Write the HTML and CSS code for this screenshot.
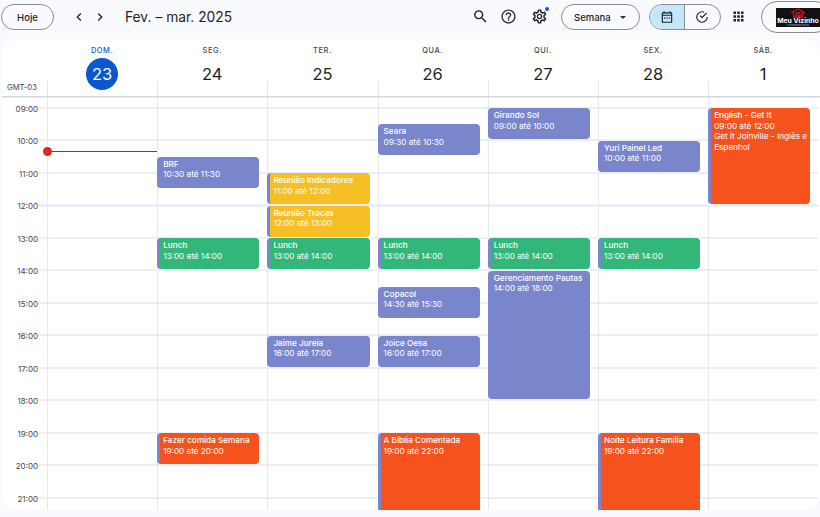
FILE: index.html
```html
<!DOCTYPE html>
<html lang="pt-BR">
<head>
    <meta charset="UTF-8">
    <meta name="viewport" content="width=device-width, initial-scale=1.0">
    <title>Agenda - Fev. – mar. 2025</title>
    <link rel="stylesheet" href="styles.css">
</head>
<body>
    <!-- barra de cima -->
    <header class="toolbar">
        <button class="pill today">Hoje</button>
        <div class="nav-arrows">
            <svg viewBox="0 0 24 24"><path d="M15.4 7.4 14 6l-6 6 6 6 1.4-1.4-4.6-4.6z"/></svg>
            <svg viewBox="0 0 24 24"><path d="M8.6 7.4 10 6l6 6-6 6-1.4-1.4 4.6-4.6z"/></svg>
        </div>
        <h1 class="range">Fev. – mar. 2025</h1>
        <div class="tools">
            <svg class="icon-search" viewBox="0 0 24 24"><path d="M15.5 14h-.79l-.28-.27A6.471 6.471 0 0 0 16 9.5 6.5 6.5 0 1 0 9.5 16c1.61 0 3.09-.59 4.23-1.57l.27.28v.79l5 4.99L20.49 19l-4.99-5zm-6 0C7.01 14 5 11.99 5 9.5S7.01 5 9.5 5 14 7.01 14 9.5 11.99 14 9.5 14z"/></svg>
            <svg class="icon-help" viewBox="0 0 24 24"><path d="M11 18h2v-2h-2v2zm1-16C6.48 2 2 6.48 2 12s4.48 10 10 10 10-4.48 10-10S17.52 2 12 2zm0 18c-4.41 0-8-3.59-8-8s3.59-8 8-8 8 3.59 8 8-3.59 8-8 8zm0-14c-2.21 0-4 1.79-4 4h2c0-1.1.9-2 2-2s2 .9 2 2c0 2-3 1.75-3 5h2c0-2.25 3-2.5 3-5 0-2.21-1.79-4-4-4z"/></svg>
            <span class="settings">
                <svg viewBox="0 0 24 24"><path d="M19.43 12.98c.04-.32.07-.64.07-.98 0-.34-.03-.66-.07-.98l2.11-1.65c.19-.15.24-.42.12-.64l-2-3.46c-.09-.16-.26-.25-.44-.25-.06 0-.12.01-.17.03l-2.49 1c-.52-.4-1.08-.73-1.69-.98l-.38-2.65C14.46 2.18 14.25 2 14 2h-4c-.25 0-.46.18-.49.42l-.38 2.65c-.61.25-1.17.59-1.69.98l-2.49-1c-.06-.02-.12-.03-.18-.03-.17 0-.34.09-.43.25l-2 3.46c-.13.22-.07.49.12.64l2.11 1.65c-.04.32-.07.65-.07.98 0 .33.03.66.07.98l-2.11 1.65c-.19.15-.24.42-.12.64l2 3.46c.09.16.26.25.44.25.06 0 .12-.01.17-.03l2.49-1c.52.4 1.08.73 1.69.98l.38 2.65c.03.24.24.42.49.42h4c.25 0 .46-.18.49-.42l.38-2.65c.61-.25 1.17-.59 1.69-.98l2.49 1c.06.02.12.03.18.03.17 0 .34-.09.43-.25l2-3.46c.12-.22.07-.49-.12-.64l-2.11-1.65zm-1.98-1.71c.04.31.05.52.05.73 0 .21-.02.43-.05.73l-.14 1.13.89.7 1.08.84-.7 1.21-1.27-.51-1.04-.42-.9.68c-.43.32-.84.56-1.25.73l-1.06.43-.16 1.13-.2 1.35h-1.4l-.19-1.35-.16-1.13-1.06-.43c-.43-.18-.83-.41-1.23-.71l-.91-.7-1.06.43-1.27.51-.7-1.21 1.08-.84.89-.7-.14-1.13c-.03-.31-.05-.54-.05-.74s.02-.43.05-.73l.14-1.13-.89-.7-1.08-.84.7-1.21 1.27.51 1.04.42.9-.68c.43-.32.84-.56 1.25-.73l1.06-.43.16-1.13.2-1.35h1.39l.19 1.35.16 1.13 1.06.43c.43.18.83.41 1.23.71l.91.7 1.06-.43 1.27-.51.7 1.21-1.07.85-.89.7.14 1.13zM12 8c-2.21 0-4 1.79-4 4s1.79 4 4 4 4-1.79 4-4-1.79-4-4-4zm0 6c-1.1 0-2-.9-2-2s.9-2 2-2 2 .9 2 2-.9 2-2 2z"/></svg>
                <i class="dot"></i>
            </span>
            <button class="pill view-select">Semana <i class="caret"></i></button>
            <div class="switch">
                <span class="switch-part active">
                    <svg viewBox="0 0 24 24"><path d="M19 4h-1V2h-2v2H8V2H6v2H5a2 2 0 0 0-2 2v14a2 2 0 0 0 2 2h14a2 2 0 0 0 2-2V6a2 2 0 0 0-2-2zm0 16H5V10h14v10zM5 8V6h14v2H5zm2 5h2v2H7v-2zm4 0h2v2h-2v-2zm4 0h2v2h-2v-2z"/></svg>
                </span>
                <span class="switch-part">
                    <svg viewBox="0 0 24 24"><path d="M12 2a10 10 0 1 0 10 10h-2a8 8 0 1 1-8-8c1 0 2 .2 3 .6l1.5-1.5A10 10 0 0 0 12 2zm7.3 2.3L12 11.6 9.4 9 8 10.4l4 4 8.7-8.7-1.4-1.4z"/></svg>
                </span>
            </div>
            <svg class="icon-apps" viewBox="0 0 24 24"><path d="M4 4h4v4H4zm6 0h4v4h-4zm6 0h4v4h-4zM4 10h4v4H4zm6 0h4v4h-4zm6 0h4v4h-4zM4 16h4v4H4zm6 0h4v4h-4zm6 0h4v4h-4z"/></svg>
            <div class="profile">
                <div class="logo">
                    <svg viewBox="0 0 16 10"><path d="M1 5 8 1l7 4M3.500 4v5h9V4M6 5h4v2.500H6z" fill="none" stroke="#c8141c" stroke-width="1.300"/></svg>
                    <b>Meu Vizinho</b>
                    <small>SUPERMERCADOS</small>
                </div>
            </div>
        </div>
    </header>

    <main class="card">
        <!-- dias da semana -->
        <div class="week-head">
            <div class="gmt">GMT-03</div>
            <div class="day-head today-head"><span>DOM.</span><strong>23</strong></div>
            <div class="day-head"><span>SEG.</span><strong>24</strong></div>
            <div class="day-head"><span>TER.</span><strong>25</strong></div>
            <div class="day-head"><span>QUA.</span><strong>26</strong></div>
            <div class="day-head"><span>QUI.</span><strong>27</strong></div>
            <div class="day-head"><span>SEX.</span><strong>28</strong></div>
            <div class="day-head"><span>SÁB.</span><strong>1</strong></div>
        </div>

        <div class="week-body">
            <div class="hours">
                <span>09:00</span><span>10:00</span><span>11:00</span><span>12:00</span>
                <span>13:00</span><span>14:00</span><span>15:00</span><span>16:00</span>
                <span>17:00</span><span>18:00</span><span>19:00</span><span>20:00</span>
                <span>21:00</span>
            </div>

            <!-- cada linha do grid = meia hora, a partir das 09:00 -->
            <div class="day">
                <div class="now-line"></div>
            </div>

            <div class="day">
                <div class="event blue" style="grid-row: 4 / span 2"><b>BRF</b>10:30 até 11:30</div>
                <div class="event green stripe" style="grid-row: 9 / span 2"><b>Lunch</b>13:00 até 14:00</div>
                <div class="event orange stripe" style="grid-row: 21 / span 2"><b>Fazer comida Semana</b>19:00 até 20:00</div>
            </div>

            <div class="day">
                <div class="event yellow stripe" style="grid-row: 5 / span 2"><b>Reunião Indicadores</b>11:00 até 12:00</div>
                <div class="event yellow stripe" style="grid-row: 7 / span 2"><b>Reunião Trocas</b>12:00 até 13:00</div>
                <div class="event green stripe" style="grid-row: 9 / span 2"><b>Lunch</b>13:00 até 14:00</div>
                <div class="event blue" style="grid-row: 15 / span 2"><b>Jaime Jureia</b>16:00 até 17:00</div>
            </div>

            <div class="day">
                <div class="event blue" style="grid-row: 2 / span 2"><b>Seara</b>09:30 até 10:30</div>
                <div class="event green stripe" style="grid-row: 9 / span 2"><b>Lunch</b>13:00 até 14:00</div>
                <div class="event blue" style="grid-row: 12 / span 2"><b>Copacol</b>14:30 até 15:30</div>
                <div class="event blue" style="grid-row: 15 / span 2"><b>Joice Oesa</b>16:00 até 17:00</div>
                <div class="event orange stripe" style="grid-row: 21 / span 6"><b>A Bíblia Comentada</b>19:00 até 22:00</div>
            </div>

            <div class="day">
                <div class="event blue" style="grid-row: 1 / span 2"><b>Girando Sol</b>09:00 até 10:00</div>
                <div class="event green stripe" style="grid-row: 9 / span 2"><b>Lunch</b>13:00 até 14:00</div>
                <div class="event blue" style="grid-row: 11 / span 8"><b>Gerenciamento Pautas</b>14:00 até 18:00</div>
            </div>

            <div class="day">
                <div class="event blue" style="grid-row: 3 / span 2"><b>Yuri Painel Led</b>10:00 até 11:00</div>
                <div class="event green stripe" style="grid-row: 9 / span 2"><b>Lunch</b>13:00 até 14:00</div>
                <div class="event orange stripe" style="grid-row: 21 / span 6"><b>Noite Leitura Família</b>19:00 até 22:00</div>
            </div>

            <div class="day">
                <div class="event orange stripe" style="grid-row: 1 / span 6"><b>English - Get It</b>09:00 até 12:00<br>Get it Joinville - Inglês e Espanhol</div>
            </div>
        </div>
    </main>
</body>
</html>
```

FILE: styles.css
```css
* {
    box-sizing: border-box;
}
html, body {
    height: 517px;
    overflow: hidden;
}
body {
    margin: 0;
    background-color: #f8fafd;
    color: #1f1f1f;
    font-family: Inter, "Liberation Sans", sans-serif;
}
svg {
    display: block;
    fill: currentColor;
}

/* barra de cima */
.toolbar {
    height: 39px;
    display: flex;
    align-items: flex-start;
    padding: 4px 0 0 1px;
}
.pill {
    height: 26px;
    border: 1px solid #8a8d8c;
    border-radius: 13px;
    background: transparent;
    font-family: Inter, sans-serif;
    font-size: 9.5px;
    font-weight: 500;
    color: #1f1f1f;
    padding: 0;
}
.today {
    width: 53px;
}
.nav-arrows {
    display: flex;
    gap: 5px;
    margin: 5px 0 0 17px;
}
.nav-arrows svg {
    width: 16px;
    height: 16px;
}
.range {
    margin: 0 0 0 17px;
    font-size: 13.8px;
    font-weight: 400;
    line-height: 26px;
}
.tools {
    margin-left: auto;
    display: flex;
    align-items: flex-start;
    width: 348px;
    height: 30px;
}
.icon-search {
    width: 17px;
    height: 17px;
    margin: 4px 0 0 0;
}
.icon-help {
    width: 17px;
    height: 17px;
    margin: 4px 0 0 11px;
    color: #303030;
}
.settings {
    position: relative;
    margin: 4px 0 0 14px;
}
.settings svg {
    width: 17px;
    height: 17px;
}
.dot {
    position: absolute;
    top: -1px;
    right: -1px;
    width: 4px;
    height: 4px;
    border-radius: 50%;
    background-color: #0b57d0;
}
.view-select {
    width: 79px;
    margin-left: 13px;
    padding-left: 12px;
    display: flex;
    align-items: center;
    gap: 9px;
}
.caret {
    width: 0;
    height: 0;
    border: 3px solid transparent;
    border-top: 3px solid #333;
    border-bottom: 0;
}
.switch {
    width: 72px;
    height: 26px;
    margin-left: 9px;
    display: flex;
    border: 1px solid #8a8d8c;
    border-radius: 13px;
    overflow: hidden;
}
.switch-part {
    width: 36px;
    display: flex;
    align-items: center;
    justify-content: center;
}
.switch-part svg {
    width: 14px;
    height: 14px;
}
.switch-part.active {
    width: 35px;
    background-color: #c2e7ff;
    border-right: 1px solid #8a8d8c;
}
.icon-apps {
    width: 15px;
    height: 15px;
    margin: 5px 0 0 10px;
}
.profile {
    width: 70px;
    height: 32px;
    margin: -3px -12px 0 15px;
    border: 1px solid #8a8d8c;
    border-radius: 16px;
    padding: 6px 0 0 14px;
    flex-shrink: 0;
}
.logo {
    width: 44px;
    height: 19px;
    background-color: #111;
    color: #fff;
    text-align: center;
    overflow: hidden;
    white-space: nowrap;
}
.logo svg {
    width: 16px;
    height: 10px;
    margin: 0 auto;
}
.logo b {
    display: block;
    font-size: 6.8px;
    line-height: 6px;
}
.logo small {
    display: block;
    font-size: 2.5px;
    line-height: 3px;
    color: #bbb;
}

/* a grade da semana */
.card {
    width: 818px;
    height: 471px;
    margin-left: 2px;
    background-color: #fff;
    border-radius: 16px;
    overflow: hidden;
}
.week-head, .week-body {
    display: grid;
    grid-template-columns: 45px repeat(7, 110.2px);
}
.week-head {
    height: 58px;
    border-bottom: 1px solid #d4d6da;
    box-shadow: 0 1px 1px #eceef1;
}
.gmt {
    align-self: end;
    padding: 0 0 3px 5px;
    font-size: 7.6px;
    line-height: 11px;
    color: #444746;
}
.day-head {
    position: relative;
    text-align: center;
}
.day-head::after {
    content: "";
    position: absolute;
    left: 0;
    bottom: 0;
    height: 15px;
    border-left: 1px solid #e3e6ec;
}
.day-head span {
    display: block;
    padding-top: 7px;
    font-size: 7.4px;
    font-weight: 500;
    line-height: 10px;
    letter-spacing: 0.6px;
    color: #444746;
}
.day-head strong {
    display: block;
    width: 32px;
    height: 32px;
    margin: 2px auto 0;
    border-radius: 50%;
    font-size: 16.5px;
    font-weight: 400;
    line-height: 32px;
    color: #1f1f1f;
}
.today-head span {
    color: #0b57d0;
}
.today-head strong {
    background-color: #0b57d0;
    color: #fff;
    position: relative;
    z-index: 1;
}
.week-body {
    height: 413px;
}
.hours {
    padding-top: 5.500px;
    padding-right: 9px;
    text-align: right;
    /* tracinho de cada hora, entre o texto e a primeira coluna */
    background-image: repeating-linear-gradient(to bottom, #edeff4 0, #edeff4 2px, transparent 2px, transparent 32.5px);
    background-position: 100% 10px;
    background-size: 9px 100%;
    background-repeat: no-repeat;
}
.hours span {
    display: block;
    height: 32.5px;
    font-size: 8px;
    line-height: 12px;
    color: #444746;
}
.day {
    position: relative;
    display: grid;
    grid-template-rows: repeat(28, 16.25px);
    padding-top: 11px;
    border-left: 1px solid #e6e9f1;
    background-image: repeating-linear-gradient(to bottom, #edeff4 0, #edeff4 2px, transparent 2px, transparent 32.5px);
    background-position: 0 10px;
    background-repeat: no-repeat;
}

/* eventos */
.event {
    margin: 0 8px 1.5px -1px;
    padding: 2px 2px 0 6px;
    border-radius: 4px;
    font-size: 8.2px;
    line-height: 10.5px;
    color: #fff;
    overflow: hidden;
}
.event b {
    display: block;
    font-weight: 500;
}
.blue {
    background-color: #7986cb;
}
.green {
    background-color: #33b679;
}
.yellow {
    background-color: #f6bf26;
}
.orange {
    background-color: #f6521e;
}
.stripe {
    border-left: 3px solid #7986cb;
    padding-left: 3px;
}
.now-line {
    position: absolute;
    top: 54px;
    left: 0;
    right: 0;
    border-top: 1px solid #c5221f;
}
.now-line::before {
    content: "";
    position: absolute;
    left: -5px;
    top: -5px;
    width: 9px;
    height: 9px;
    border-radius: 50%;
    background-color: #e0281f;
}
```
